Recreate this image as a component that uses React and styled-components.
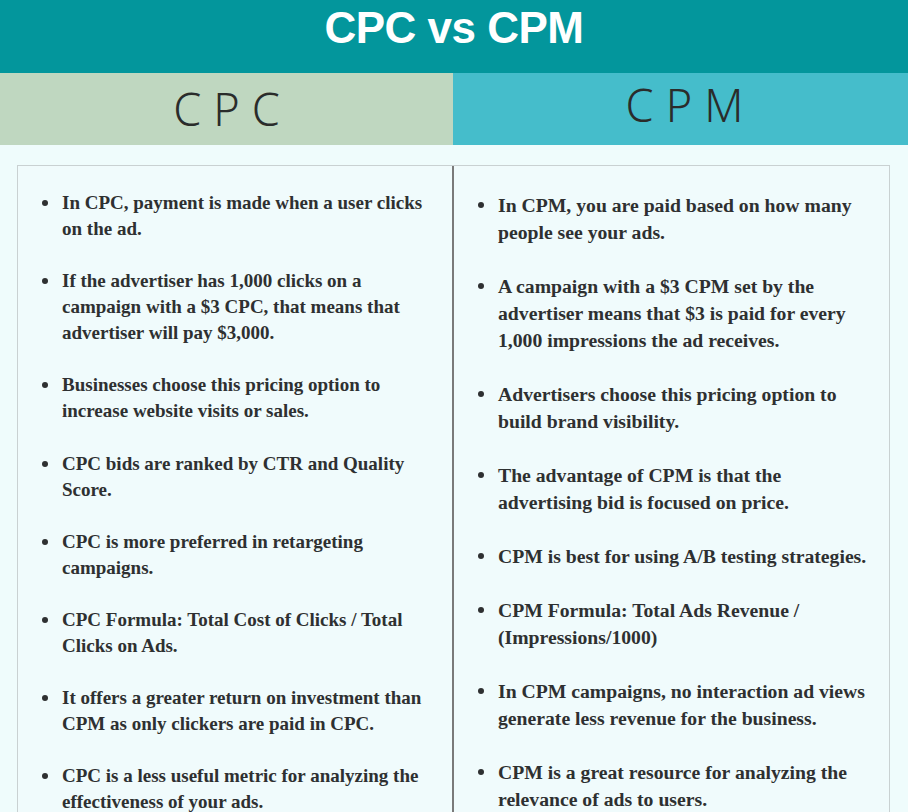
import React from "react";
import styled, { createGlobalStyle } from "styled-components";

const GlobalStyle = createGlobalStyle`
  html, body {
    margin: 0;
    padding: 0;
    background: #effcfc;
  }
`;

const Page = styled.div`
  width: 908px;
  height: 812px;
  overflow: hidden;
  background: #effcfc;
  display: flex;
  flex-direction: column;
`;

const TitleBar = styled.div`
  flex: none;
  height: 73px;
  box-sizing: border-box;
  background: #03969c;
  display: flex;
  align-items: center;
  justify-content: center;
  padding-bottom: 18px;
  color: #ffffff;
  font-family: "Liberation Sans", Arial, sans-serif;
  font-weight: 700;
  font-size: 44px;
  letter-spacing: -0.5px;
`;

const HeaderRow = styled.div`
  flex: none;
  display: grid;
  grid-template-columns: 453px 1fr;
  height: 72px;
`;

const HeaderCell = styled.div`
  box-sizing: border-box;
  background: ${(p) => p.$bg};
  display: flex;
  align-items: center;
  justify-content: center;
  padding-bottom: ${(p) => p.$lift}px;
  padding-left: ${(p) => p.$shift}px;
  font-family: "Noto Sans", "DejaVu Sans", sans-serif;
  font-weight: 300;
  font-size: 45px;
  letter-spacing: 12px;
  color: #2a2c2b;
  text-indent: 12px;
`;

const Body = styled.div`
  flex: 1;
  min-height: 0;
  padding: 20px 18px 0 17px;
  display: flex;
`;

const Table = styled.div`
  flex: 1;
  display: grid;
  grid-template-columns: 436px 1fr;
  border: 1px solid #c9d1d2;
  border-bottom: none;
  background: #f0fbfc;
`;

const Column = styled.ul`
  list-style: none;
  margin: 0;
  padding: ${(p) => p.$top}px 0 0 24px;
  display: flex;
  flex-direction: column;
  gap: ${(p) => p.$gap}px;
  border-right: ${(p) => (p.$divider ? "2px solid #7a7a7a" : "none")};
  font-family: "Liberation Serif", "Times New Roman", serif;
  font-weight: 700;
  font-size: ${(p) => p.$size}px;
  line-height: ${(p) => p.$lh}px;
  color: #2e3031;
`;

const Item = styled.li`
  display: flex;
  align-items: flex-start;
  white-space: nowrap;
`;

const Dot = styled.span`
  flex: none;
  width: 6px;
  height: 6px;
  border-radius: 50%;
  background: #2e3031;
  margin-top: ${(p) => p.$lh / 2 - 3}px;
  margin-right: 14px;
`;

const left = [
  ["In CPC, payment is made when a user clicks", "on the ad."],
  [
    "If the advertiser has 1,000 clicks on a",
    "campaign with a $3 CPC, that means that",
    "advertiser will pay $3,000.",
  ],
  ["Businesses choose this pricing option to", "increase website visits or sales."],
  ["CPC bids are ranked by CTR and Quality", "Score."],
  ["CPC is more preferred in retargeting", "campaigns."],
  ["CPC Formula: Total Cost of Clicks / Total", "Clicks on Ads."],
  ["It offers a greater return on investment than", "CPM as only clickers are paid in CPC."],
  ["CPC is a less useful metric for analyzing the", "effectiveness of your ads."],
];

const right = [
  ["In CPM, you are paid based on how many", "people see your ads."],
  [
    "A campaign with a $3 CPM set by the",
    "advertiser means that $3 is paid for every",
    "1,000 impressions the ad receives.",
  ],
  ["Advertisers choose this pricing option to", "build brand visibility."],
  ["The advantage of CPM is that the", "advertising bid is focused on price."],
  ["CPM is best for using A/B testing strategies."],
  ["CPM Formula: Total Ads Revenue /", "(Impressions/1000)"],
  ["In CPM campaigns, no interaction ad views", "generate less revenue for the business."],
  ["CPM is a great resource for analyzing the", "relevance of ads to users."],
];

function BulletList({ items, top, gap, lh, size, divider }) {
  return (
    <Column $top={top} $gap={gap} $lh={lh} $size={size} $divider={divider}>
      {items.map((lines, i) => (
        <Item key={i}>
          <Dot $lh={lh} />
          <span>
            {lines.map((line, j) => (
              <React.Fragment key={j}>
                {j > 0 && <br />}
                {line}
              </React.Fragment>
            ))}
          </span>
        </Item>
      ))}
    </Column>
  );
}

export default function App() {
  return (
    <>
      <GlobalStyle />
      <Page>
        <TitleBar>CPC vs CPM</TitleBar>
        <HeaderRow>
          <HeaderCell $bg="#bfd7c0" $lift={2} $shift={0}>CPC</HeaderCell>
          <HeaderCell $bg="#45bdcb" $lift={10} $shift={8}>CPM</HeaderCell>
        </HeaderRow>
        <Body>
          <Table>
            <BulletList items={left} top={24} gap={26.2} lh={26} size={19} divider />
            <BulletList items={right} top={26} gap={27.4} lh={26.8} size={19.7} />
          </Table>
        </Body>
      </Page>
    </>
  );
}
